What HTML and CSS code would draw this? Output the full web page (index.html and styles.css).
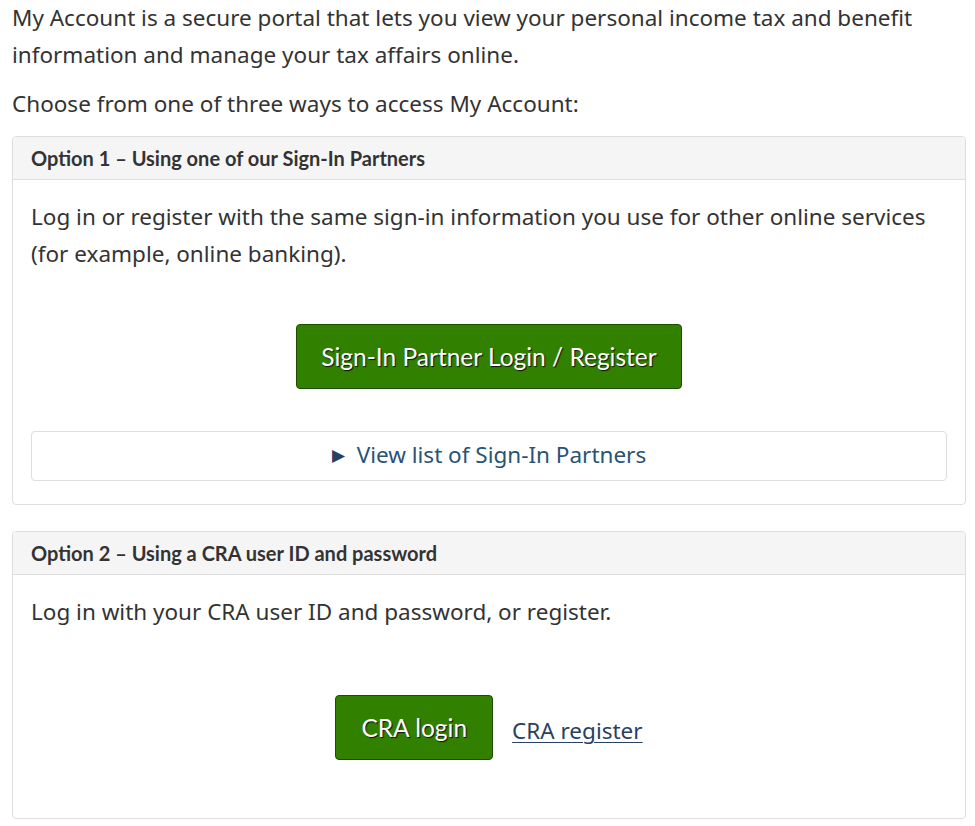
FILE: index.html
```html
<!DOCTYPE html>
<html lang="en">
<head>
<meta charset="utf-8">
<title>My Account</title>
<link rel="stylesheet" href="styles.css">
</head>
<body>
<main class="page">
  <p class="intro">My Account is a secure portal that lets you view your personal income tax and benefit information and manage your tax affairs online.</p>
  <p class="intro">Choose from one of three ways to access My Account:</p>

  <section class="panel">
    <h2 class="panel-heading">Option 1 – Using one of our Sign-In Partners</h2>
    <div class="panel-body panel-body-one">
      <p class="panel-text">Log in or register with the same sign-in information you use for other online services (for example, online banking).</p>
      <div class="action-row action-row-one">
        <a class="btn-cta" href="#">Sign-In Partner Login / Register</a>
      </div>
      <details class="partners">
        <summary class="partners-summary"><span class="tri">&#9654;</span> View list of Sign-In Partners</summary>
      </details>
    </div>
  </section>

  <section class="panel panel-two">
    <h2 class="panel-heading">Option 2 – Using a CRA user ID and password</h2>
    <div class="panel-body panel-body-two">
      <p class="panel-text">Log in with your CRA user ID and password, or register.</p>
      <div class="action-row action-row-two">
        <a class="btn-cta btn-small" href="#">CRA login</a>
        <a class="text-link" href="#">CRA register</a>
      </div>
    </div>
  </section>
</main>
</body>
</html>
```

FILE: styles.css
```css
html, body {
  margin: 0;
  padding: 0;
  background: #fff;
}

body {
  font-family: "Noto Sans", "Open Sans", sans-serif;
  font-size: 22.5px;
  line-height: 36.5px;
  color: #333;
}

.page {
  margin: 0 9px 0 12px;
}

.intro {
  margin: 0 0 13px 0;
}

.panel {
  border: 1px solid #ddd;
  border-radius: 4px;
  background: #fff;
  overflow: hidden;
}

.panel-two {
  margin-top: 26px;
}

.panel-heading {
  margin: 0;
  padding: 10px 18px 9px 18px;
  background: #f5f5f5;
  border-bottom: 1px solid #ddd;
  font-family: "Lato", "Noto Sans", sans-serif;
  font-weight: 700;
  font-size: 20px;
  line-height: 23px;
  color: #333;
}

.panel-body {
  padding: 18px 18px 23px 18px;
}

.panel-body-two {
  padding-bottom: 58px;
}

.panel-text {
  margin: 0;
  line-height: 37px;
}

.action-row {
  display: flex;
  justify-content: center;
  align-items: center;
  gap: 19px;
}

.action-row-one {
  margin-top: 52px;
  margin-bottom: 42px;
}

.action-row-two {
  margin-top: 65px;
}

.btn-cta {
  display: inline-block;
  background: #318000;
  border: 1px solid #1e4d00;
  border-radius: 4px;
  color: #fff;
  text-decoration: none;
  font-family: "Lato", "Noto Sans", sans-serif;
  font-size: 24.5px;
  line-height: 25px;
  padding: 19px 24px;
  text-shadow: 1px 1px 1px #111;
}

.btn-small {
  padding: 19px 25px;
}

.text-link {
  color: #284162;
  text-decoration: underline;
  text-underline-offset: 3px;
  text-decoration-thickness: 1px;
  font-size: 22.5px;
  margin-top: 8px;
}

.partners {
  border: 1px solid #ddd;
  border-radius: 4px;
}

.partners-summary {
  list-style: none;
  display: block;
  text-align: center;
  padding: 5px 10px;
  color: #295376;
  font-size: 22.5px;
  cursor: pointer;
}

.partners-summary::-webkit-details-marker {
  display: none;
}

.tri {
  font-size: 17px;
  color: #284162;
  margin-right: 6px;
  position: relative;
  top: -2px;
}
```
